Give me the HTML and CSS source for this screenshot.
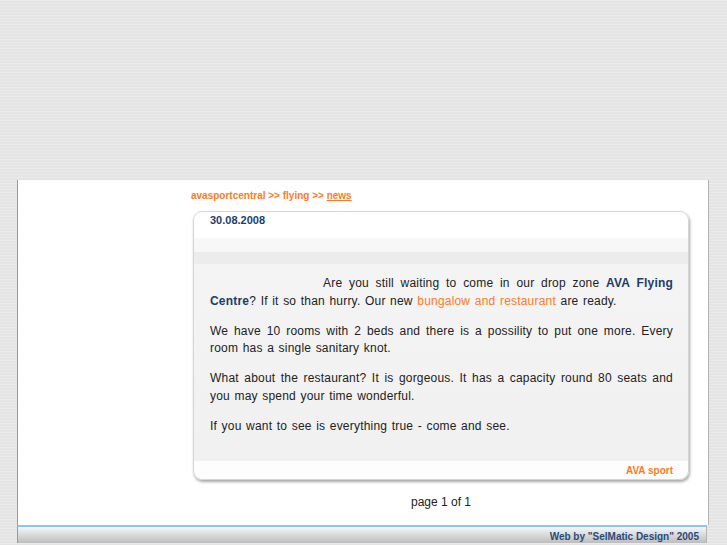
FILE: index.html
```html
<!DOCTYPE html>
<html lang="en">
  <head>
    <meta charset="UTF-8" />
    <title>AVA sport - news</title>
    <link rel="stylesheet" href="styles.css">
  </head>
  <body>
    <div class="top"></div>
    <div class="page">
      <aside class="side"></aside>
      <main class="content">
        <p class="crumbs">
          <a href="#">avasportcentral</a> &gt;&gt; <a href="#">flying</a> &gt;&gt; <a href="#" class="here">news</a>
        </p>

        <article class="news">
          <h3 class="datum">30.08.2008</h3>
          <div class="tekst">
            <p class="first">Are you still waiting to come in our drop zone <b>AVA Flying Centre</b>? If it so than hurry. Our new <a href="#">bungalow and restaurant</a> are ready.</p>
            <p>We have 10 rooms with 2 beds and there is a possility to put one more. Every room has a single sanitary knot.</p>
            <p>What about the restaurant? It is gorgeous. It has a capacity round 80 seats and you may spend your time wonderful.</p>
            <p>If you want to see is everything true - come and see.</p>
          </div>
          <div class="signatur">AVA sport</div>
        </article>

        <p class="pages">page 1 of 1</p>
      </main>
    </div>
    <footer>Web by "SelMatic Design" 2005</footer>
  </body>
</html>
```

FILE: styles.css
```css
html,
body {
  margin: 0;
  height: 100%;
}

body {
  background-color: #e7e7e7;
  background-image: repeating-linear-gradient(#ebebeb 0, #ebebeb 1px, #e4e4e4 1px, #e4e4e4 3px);
  font-family: "Liberation Sans", Arial, sans-serif;
  color: #222;
}

.top {
  height: 180px;
}

.page {
  margin-left: 17px;
  width: 690px;
  height: 345px;
  background: #fff;
  border-left: 1px solid #9a9a9a;
  border-right: 1px solid #b5b5b5;
  display: grid;
  grid-template-columns: 175px 496px;
}

.crumbs {
  margin: 9px 0 0 -2px;
  font-weight: bold;
  font-size: 10px;
  line-height: 14px;
  color: #ff7a1f;
}

.crumbs a {
  color: #ff7a1f;
  text-decoration: none;
}

.crumbs .here {
  text-decoration: underline;
}

.news {
  margin-top: 8px;
  height: 267px;
  border: 1px solid #d6d6d6;
  border-radius: 9px;
  box-shadow: 1px 2px 3px rgba(0, 0, 0, 0.35);
  background: linear-gradient(#fff 0, #fff 26px, #f7f7f7 26px, #f7f7f7 40px, #ececec 40px, #ececec 52px, #f4f4f4 52px, #f0f0f0 100%);
  display: flex;
  flex-direction: column;
}

.datum {
  margin: 0;
  padding: 1px 0 0 16px;
  font-size: 11px;
  line-height: 14px;
  color: #1b3d6e;
}

.tekst {
  flex: 1;
  padding: 48px 15px 0 16px;
  font-size: 12px;
  line-height: 17.5px;
  text-align: justify;
  color: #222;
}

.tekst p {
  margin: 0 0 12.5px;
  word-spacing: 1px;
  letter-spacing: 0.2px;
}

.tekst .first {
  text-indent: 113px;
}

.tekst b {
  color: #1b3d6e;
}

.tekst a {
  color: #ff7a1f;
  text-decoration: none;
}

.signatur {
  padding: 4px 15px 3px;
  background: #fdfdfd;
  border-radius: 0 0 9px 9px;
  text-align: right;
  font-size: 10px;
  font-weight: bold;
  color: #ff7a1f;
}

.pages {
  margin: 15px 0 0;
  text-align: center;
  font-size: 12px;
  line-height: 14px;
}

footer {
  margin-left: 17px;
  width: 690px;
  height: 18px;
  border-left: 1px solid #9a9a9a;
  border-right: 1px solid #b5b5b5;
  border-top: 2px solid #8cc6ec;
  background: linear-gradient(#f6f6f6, #bdbdbd);
  text-align: right;
  box-sizing: border-box;
  padding: 3px 7px 0 0;
  font-weight: bold;
  font-size: 10px;
  line-height: 13px;
  color: #2a4a7c;
}
```
